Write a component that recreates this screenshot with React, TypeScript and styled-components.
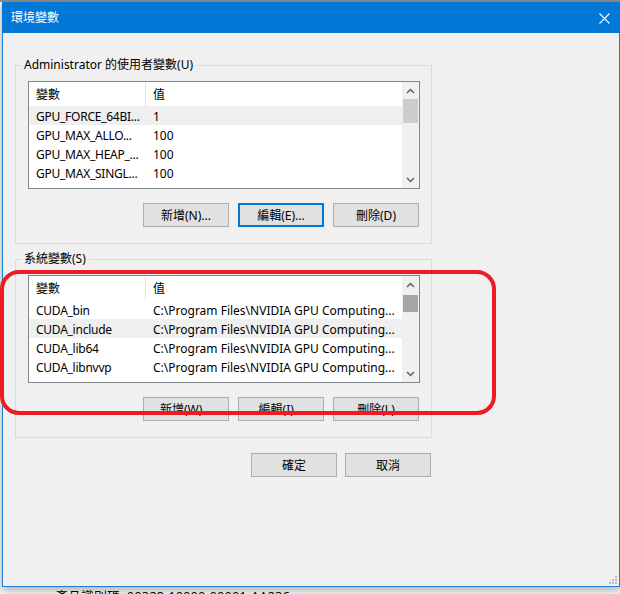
import React from "react";
import styled, { createGlobalStyle } from "styled-components";

const GlobalStyle = createGlobalStyle`
  html, body { margin: 0; padding: 0; background: #f2f2f2; }
  body {
    font-family: "Segoe UI", "Noto Sans", "Noto Sans CJK TC", sans-serif;
    font-size: 12px;
    color: #000;
  }
  * { box-sizing: border-box; }
`;

const Screen = styled.div`
  position: relative;
  width: 620px;
  height: 594px;
  overflow: hidden;
  display: flex;
  flex-direction: column;
  padding: 2px 0 0 2px;
  background: linear-gradient(#8c8c8c 0 2px, #f3f3f3 2px);
`;

const Window = styled.div`
  position: relative;
  flex-shrink: 0;
  width: 618px;
  height: 585px;
  border: 1px solid #1c7fd6;
  border-top: none;
  background: #f0f0f0;
  display: flex;
  flex-direction: column;
  box-shadow: 0 3px 8px rgba(0, 0, 0, 0.28);
`;

const TitleBar = styled.div`
  height: 31px;
  margin: 0 -1px;
  background: #0078d7;
  color: #fff;
  display: flex;
  align-items: center;
  justify-content: space-between;
  padding: 0 10px 0 9px;
  font-size: 12px;
`;

const Title = styled.span`
  line-height: 16px;
  padding-top: 1px;
`;

const CloseIcon = styled.svg`
  width: 11px;
  height: 11px;
  display: block;
  margin-top: 1px;
`;

const Body = styled.div`
  flex: 1;
  display: flex;
  flex-direction: column;
  align-items: flex-start;
  padding: 24px 0 0 12px;
`;

const Group = styled.fieldset<{ $spaced?: boolean }>`
  margin: ${(p) => (p.$spaced ? "7px 0 0 0" : "0")};
  width: 417px;
  min-width: 0;
  border: 1px solid #dcdcdc;
  padding: 8px 11px 16px 12px;
  display: flex;
  flex-direction: column;
`;

const Legend = styled.legend`
  padding: 0 3px;
  margin-left: -7px;
  height: 16px;
  line-height: 16px;
  font-size: 12px;
`;

const ListBox = styled.div`
  display: flex;
  height: 108px;
  border: 1px solid #828790;
  background: #fff;
`;

const ListContent = styled.div`
  flex: 1;
  min-width: 0;
  display: flex;
  flex-direction: column;
  overflow: hidden;
`;

const HeaderRow = styled.div`
  display: grid;
  grid-template-columns: 117px 1fr;
  height: 24px;
  flex-shrink: 0;
`;

const HeaderCell = styled.div<{ $divider?: boolean }>`
  display: flex;
  align-items: center;
  padding: 2px 0 0 7px;
  border-right: ${(p) => (p.$divider ? "1px solid #e5e5e5" : "none")};
  line-height: 16px;
`;

const Row = styled.div<{ $selected?: boolean }>`
  display: grid;
  grid-template-columns: 117px 1fr;
  height: 19px;
  flex-shrink: 0;
  background: ${(p) => (p.$selected ? "#efefef" : "transparent")};
`;

const Cell = styled.div<{ $tight?: boolean }>`
  height: 19px;
  padding: 2px 0 0 7px;
  line-height: 17px;
  white-space: nowrap;
  letter-spacing: ${(p) => (p.$tight ? "-0.25px" : "0")};
`;

const ScrollBar = styled.div`
  width: 17px;
  flex-shrink: 0;
  background: #f0f0f0;
  display: flex;
  flex-direction: column;
`;

const ArrowBox = styled.div`
  height: 17px;
  display: flex;
  align-items: center;
  justify-content: center;
  flex-shrink: 0;
`;

const Track = styled.div`
  flex: 1;
  display: flex;
  flex-direction: column;
  padding: 0 1px;
`;

const Thumb = styled.div<{ $dark?: boolean }>`
  background: ${(p) => (p.$dark ? "#a6a6a6" : "#cdcdcd")};
`;

const ButtonRow = styled.div`
  display: flex;
  justify-content: flex-end;
  gap: 9px;
  margin-top: 14px;
  padding-right: 1px;
`;

const DialogButtons = styled.div`
  display: flex;
  justify-content: flex-end;
  gap: 8px;
  width: 416px;
  margin-top: 15px;
`;

const Button = styled.button<{ $focused?: boolean }>`
  width: 86px;
  height: 24px;
  padding: 1px 0 0;
  border: ${(p) => (p.$focused ? "2px solid #0078d7" : "1px solid #adadad")};
  background: #e1e1e1;
  color: #000;
  font-family: inherit;
  font-size: 12px;
  line-height: 16px;
`;

const Grip = styled.svg`
  position: absolute;
  right: 2px;
  bottom: 2px;
  width: 9px;
  height: 9px;
`;

const Footer = styled.div`
  margin: 2px 0 0 53px;
  font-size: 13px;
  line-height: 15px;
  color: #000;
  white-space: nowrap;
`;

const Annotation = styled.svg`
  position: absolute;
  left: 0;
  top: 270px;
  width: 497px;
  height: 146px;
  pointer-events: none;
`;

type Item = { name: string; value: string };

const Chevron = ({ up }: { up?: boolean }) => (
  <svg width="9" height="6" viewBox="0 0 9 6">
    <polyline
      points={up ? "1,5 4.5,1.5 8,5" : "1,1 4.5,4.5 8,1"}
      fill="none"
      stroke="#606060"
      strokeWidth="1.5"
    />
  </svg>
);

const VarList = ({
  items,
  selected,
  thumbTop,
  thumbHeight,
  darkThumb,
}: {
  items: Item[];
  selected: number;
  thumbTop: number;
  thumbHeight: number;
  darkThumb?: boolean;
}) => (
  <ListBox>
    <ListContent>
      <HeaderRow>
        <HeaderCell $divider>變數</HeaderCell>
        <HeaderCell>值</HeaderCell>
      </HeaderRow>
      {items.map((it, i) => (
        <Row key={it.name} $selected={i === selected}>
          <Cell $tight>{it.name}</Cell>
          <Cell>{it.value}</Cell>
        </Row>
      ))}
    </ListContent>
    <ScrollBar>
      <ArrowBox>
        <Chevron up />
      </ArrowBox>
      <Track>
        <Thumb
          $dark={darkThumb}
          style={{ marginTop: thumbTop, height: thumbHeight }}
        />
      </Track>
      <ArrowBox>
        <Chevron />
      </ArrowBox>
    </ScrollBar>
  </ListBox>
);

const userVars: Item[] = [
  { name: "GPU_FORCE_64BI...", value: "1" },
  { name: "GPU_MAX_ALLO...", value: "100" },
  { name: "GPU_MAX_HEAP_...", value: "100" },
  { name: "GPU_MAX_SINGL...", value: "100" },
];

const cudaPath = "C:\\Program Files\\NVIDIA GPU Computing...";

const systemVars: Item[] = [
  { name: "CUDA_bin", value: cudaPath },
  { name: "CUDA_include", value: cudaPath },
  { name: "CUDA_lib64", value: cudaPath },
  { name: "CUDA_libnvvp", value: cudaPath },
];

export default function App() {
  return (
    <>
      <GlobalStyle />
      <Screen>
        <Window>
          <TitleBar>
            <Title>環境變數</Title>
            <CloseIcon viewBox="0 0 11 11">
              <path d="M0.5 0.5 L10.5 10.5 M10.5 0.5 L0.5 10.5" stroke="#fff" strokeWidth="1.1" />
            </CloseIcon>
          </TitleBar>
          <Body>
            <Group>
              <Legend>Administrator 的使用者變數(U)</Legend>
              <VarList items={userVars} selected={0} thumbTop={0} thumbHeight={24} />
              <ButtonRow>
                <Button>新增(N)...</Button>
                <Button $focused>編輯(E)...</Button>
                <Button>刪除(D)</Button>
              </ButtonRow>
            </Group>
            <Group $spaced>
              <Legend>系統變數(S)</Legend>
              <VarList items={systemVars} selected={1} thumbTop={2} thumbHeight={17} darkThumb />
              <ButtonRow>
                <Button>新增(W)...</Button>
                <Button>編輯(I)...</Button>
                <Button>刪除(L)</Button>
              </ButtonRow>
            </Group>
            <DialogButtons>
              <Button>確定</Button>
              <Button>取消</Button>
            </DialogButtons>
          </Body>
          <Grip viewBox="0 0 9 9">
            <g fill="#bdbdbd">
              <rect x="7" y="1" width="2" height="2" />
              <rect x="4" y="4" width="2" height="2" />
              <rect x="7" y="4" width="2" height="2" />
              <rect x="1" y="7" width="2" height="2" />
              <rect x="4" y="7" width="2" height="2" />
              <rect x="7" y="7" width="2" height="2" />
            </g>
          </Grip>
        </Window>
        <Footer>產品識別碼: 00328-10000-00001-AA236</Footer>
        <Annotation viewBox="0 0 497 146">
          <rect
            x="2"
            y="2"
            width="492"
            height="141"
            rx="17"
            fill="none"
            stroke="#ed1c24"
            strokeWidth="4"
          />
        </Annotation>
      </Screen>
    </>
  );
}
